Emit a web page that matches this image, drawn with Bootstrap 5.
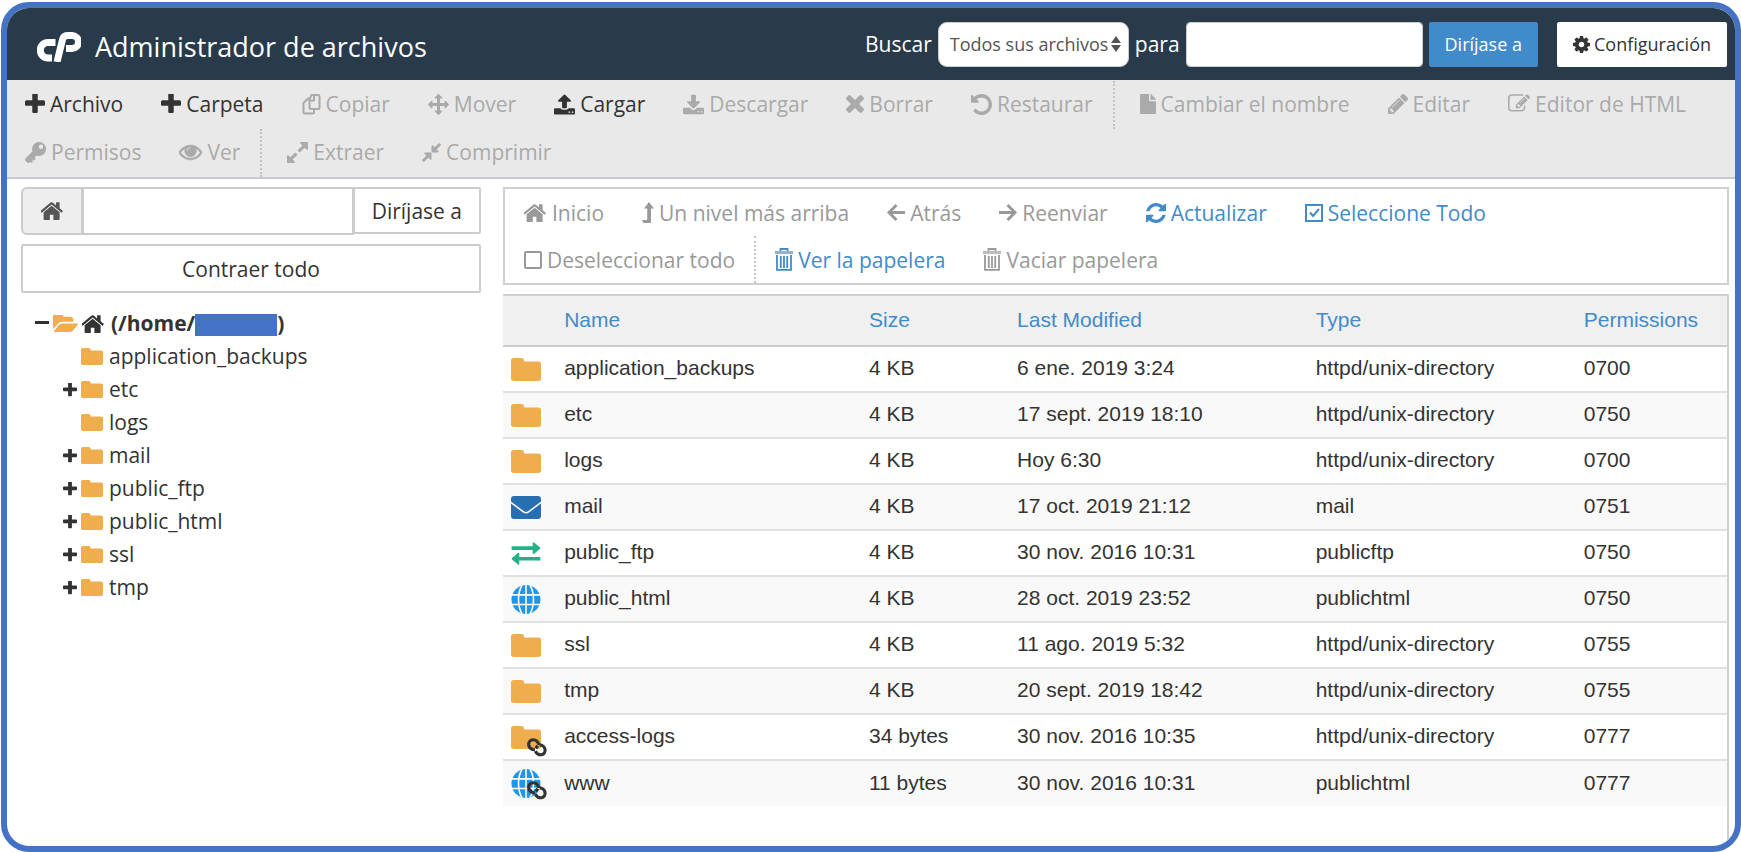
<!DOCTYPE html>
<html lang="es">
<head>
<meta charset="utf-8">
<meta name="viewport" content="width=device-width, initial-scale=1">
<title>Administrador de archivos</title>
<link href="https://cdn.jsdelivr.net/npm/bootstrap@5.3.0/dist/css/bootstrap.min.css" rel="stylesheet">
<style>
  :root { --frame: #4472c4; --navy: #293a4a; --line: #ccc; --ink: #333; --link: #428bca; --folder: #f0ad4e; }
  body { font-family: "Open Sans", sans-serif; font-size: 21px; line-height: 30px; color: var(--ink); background: #fff; padding: 2px 0 0 1px; }
  svg { fill: currentColor; flex: none; display: block; }
  .app-frame { border: 6px solid var(--frame); border-radius: 28px; min-height: calc(100vh - 2px); overflow: hidden; }
  .topbar { background: var(--navy); color: #fff; min-height: 72px; padding: 0 8px 0 30px; }
  .brand { gap: 14px; padding-top: 6px; }
  .brand h1 { font-size: 27px; line-height: 40px; }
  .search-form { gap: 6px; }
  .search-form .form-control, .search-form .form-select, .search-form .btn { height: 45px; font-size: 18px; line-height: 24px; border-color: #ccc; }
  .search-form .form-select { width: 191px; padding: 0 20px 0 11px; color: #555; border-radius: 9px; background-size: 10px 16px; background-position: right 7px center;
    background-image: url("data:image/svg+xml,%3csvg xmlns='http://www.w3.org/2000/svg' viewBox='0 0 10 16'%3e%3cpath fill='%23555' d='M0 7l5-7 5 7zM0 9h10l-5 7z'/%3e%3c/svg%3e"); }
  .search-form .form-control { width: 237px; border-radius: 4px; }
  .search-form .btn { border-radius: 2px; padding: 0 15px; }
  .search-form .btn-go { background: var(--link); color: #fff; border-color: #428bca; }
  .btn-plain { background: #fff; color: var(--ink); border: 2px solid var(--line); }
  .search-form .btn-config { margin-left: 13px; gap: 4px; border-color: #fff; padding: 0 14px; }
  .toolbar { background: #e9e9e9; border-bottom: 2px solid #c7cbd0; padding-top: 1px; }
  .toolbar .btn, .actions .btn { border: 0; border-radius: 0; font-size: 21px; line-height: 30px; gap: 5px; color: var(--ink); display: flex; align-items: center; }
  .toolbar .btn { height: 48px; padding: 0 20px 2px 18px; }
  .actions .btn { height: 47px; padding: 0 19px; }
  .toolbar .btn:disabled { color: #aaa; opacity: 1; }
  .actions .btn { color: var(--link); }
  .actions .btn:disabled { color: #999; opacity: 1; }
  .group-start { border-left: 2px dotted #c4c4c4; }
  .toolbar .group-start { padding-left: 7px; }
  .panes { padding: 8px 6px 0 14px; gap: 22px; flex: 1; }
  .tree-pane { width: 460px; flex: none; }
  .path-bar .input-group-text { width: 62px; background: #eee; border: 2px solid var(--line); border-radius: 6px; color: #555; justify-content: center; }
  .path-bar .form-control { height: 48px; border: 2px solid var(--line); }
  .path-bar .btn { border-radius: 2px; height: 47px; font-size: 21px; line-height: 24px; padding: 0 17px; }
  .btn-collapse { height: 49px; border-radius: 2px; font-size: 21px; line-height: 30px; margin-top: 9px; }
  .tree { margin: 14px 0 0; }
  .tree-row { height: 33px; gap: 4px; padding-left: 14px; }
  .tree-row a { color: inherit; text-decoration: none; line-height: 33px; padding-left: 2px; }
  .tree-branch .tree-row { padding-left: 42px; }
  .tree .toggle { width: 14px; height: 14px; padding: 0; border: 0; background: none; color: var(--ink); }
  .tree svg.dir { color: var(--folder); }
  .redacted { display: inline-block; width: 82px; height: 22px; background: var(--frame); vertical-align: middle; }
  .actions { border: 2px solid #d0d0d0; }
  .list-box { margin-top: 9px; border-right: 2px solid #d0d0d0; border-top: 2px solid #d0d0d0; flex: 1; }
  .files { font-family: "Liberation Sans", sans-serif; font-size: 21px; line-height: 24px; table-layout: fixed; width: 100%; margin: 0; color: var(--ink); }
  .files th { background: #f0f0f0; font-weight: 400; height: 50px; padding: 0 0 2px; border-bottom: 2px solid var(--line); }
  .files th a { color: var(--link); text-decoration: none; }
  .files td { height: 46px; padding: 0 0 2px; border-bottom: 2px solid #e0e0e0; }
  .files tr:nth-child(even) td { background: #f9f9f9; }
  .files tr:last-child td { border-bottom: 0; }
  .files td:first-child { padding: 0 0 0 8px; }
  .col-icon { width: 5%; } .col-name { width: 24.9%; } .col-size { width: 12.1%; } .col-date { width: 24.4%; } .col-type { width: 21.9%; }
  .file-icon { position: relative; width: 30px; }
  .file-icon .chain { position: absolute; left: 15px; top: 10px; color: var(--ink); }
  .ic-folder { color: var(--folder); } .ic-mail { color: #286fb1; } .ic-ftp { color: #26b08a; } .ic-web { color: #2196e8; }
</style>
</head>
<body>
<svg class="d-none" aria-hidden="true">
  <symbol id="plus" viewBox="192 192 1408 1408"><path d="M1600 736v192q0 40-28 68t-68 28h-416v416q0 40-28 68t-68 28h-192q-40 0-68-28t-28-68v-416h-416q-40 0-68-28t-28-68v-192q0-40 28-68t68-28h416v-416q0-40 28-68t68-28h192q40 0 68 28t28 68v416h416q40 0 68 28t28 68z"/></symbol>
  <symbol id="home" viewBox="75 240 1642 1296"><path d="M1408 992v480q0 26-19 45t-45 19h-384v-384h-256v384h-384q-26 0-45-19t-19-45v-480q0-1 .5-3t.5-3l575-474 575 474q1 2 1 6zm223-69l-62 74q-8 9-21 11h-3q-13 0-21-7l-692-577-692 577q-12 8-24 7-13-2-21-11l-62-74q-8-10-7-23.5t11-21.5l719-599q32-26 76-26t76 26l244 204v-195q0-14 9-23t23-9h192q14 0 23 9t9 23v408l219 182q10 8 11 21.5t-7 23.5z"/></symbol>
  <symbol id="folder" viewBox="64 128 1664 1408" preserveAspectRatio="none"><path d="M1728 608v784q0 60-42 102t-102 42h-1376q-60 0-102-42t-42-102v-1120q0-60 42-102t102-42h440q60 0 102 42t42 102v64h792q60 0 102 42t42 102z"/></symbol>
  <symbol id="folder-open" viewBox="0 256 1880 1280"><path d="M1879 952q0 31-31 66l-336 396q-43 51-120.500 86.500t-143.500 35.500h-1088q-34 0-60.500-13t-26.500-43q0-31 31-66l336-396q43-51 120.500-86.500t143.500-35.500h1088q34 0 60.500 13t26.500 43zm-343-344v160h-832q-94 0-197 47.500t-164 119.500l-337 396-5 6q0-4-.5-12.500t-.5-12.500v-960q0-92 66-158t158-66h320q92 0 158 66t66 158v32h544q92 0 158 66t66 158z"/></symbol>
  <symbol id="cog" viewBox="128 128 1536 1536"><path d="M1152 896q0-106-75-181t-181-75-181 75-75 181 75 181 181 75 181-75 75-181zm512-109v222q0 12-8 23t-20 13l-185 28q-19 54-39 91 35 50 107 138 10 12 10 25t-9 23q-27 37-99 108t-94 71q-12 0-26-9l-138-108q-44 23-91 38-16 136-29 186-7 28-36 28h-222q-14 0-24.500-8.500t-11.500-21.500l-28-184q-49-16-90-37l-141 107q-10 9-25 9-14 0-25-11-126-114-165-168-7-10-7-23 0-12 8-23 15-21 51-66.500t54-70.500q-27-50-41-99l-183-27q-13-2-21-12.500t-8-23.500v-222q0-12 8-23t19-13l186-28q14-46 39-92-40-57-107-138-10-12-10-24 0-10 9-23 26-36 98.500-107.500t94.500-71.500q13 0 26 10l138 107q44-23 91-38 16-136 29-186 7-28 36-28h222q14 0 24.500 8.500t11.500 21.500l28 184q49 16 90 37l142-107q9-9 24-9 13 0 25 10 129 119 165 170 7 8 7 22 0 12-8 23-15 21-51 66.500t-54 70.500q26 50 41 98l183 28q13 2 21 12.500t8 23.500z"/></symbol>
  <symbol id="copy" viewBox="0 0 19 21"><path d="M9.500 1H16q1.500 0 1.500 1.500v11q0 1.500-1.500 1.500H9q-1.500 0-1.500-1.500V5.500q0-1.500 1-2.500zM7.500 6.500H12V1M7.500 4.500H6L1.500 9v9q0 1.500 1.500 1.500h7.500q1.500 0 1.500-1.500v-3" fill="none" stroke="currentColor" stroke-width="2" stroke-linejoin="round"/></symbol>
  <symbol id="move" viewBox="0 0 1792 1792"><path d="M1792 896q0 26-19 45l-256 256q-19 19-45 19t-45-19-19-45v-128h-384v384h128q26 0 45 19t19 45-19 45l-256 256q-19 19-45 19t-45-19l-256-256q-19-19-19-45t19-45 45-19h128v-384h-384v128q0 26-19 45t-45 19-45-19l-256-256q-19-19-19-45t19-45l256-256q19-19 45-19t45 19 19 45v128h384v-384h-128q-26 0-45-19t-19-45 19-45l256-256q19-19 45-19t45 19l256 256q19 19 19 45t-19 45-45 19h-128v384h384v-128q0-26 19-45t45-19 45 19l256 256q19 19 19 45z"/></symbol>
  <symbol id="upload" viewBox="64 64 1664 1600"><path d="M1344 1472q0-26-19-45t-45-19-45 19-19 45 19 45 45 19 45-19 19-45zm256 0q0-26-19-45t-45-19-45 19-19 45 19 45 45 19 45-19 19-45zm128-224v320q0 40-28 68t-68 28h-1472q-40 0-68-28t-28-68v-320q0-40 28-68t68-28h427q21 56 70.500 92t110.500 36h256q61 0 110.500-36t70.500-92h427q40 0 68 28t28 68zm-325-648q-17 40-59 40h-256v448q0 26-19 45t-45 19h-256q-26 0-45-19t-19-45v-448h-256q-42 0-59-40-17-39 14-69l448-448q18-19 45-19t45 19l448 448q31 30 14 69z"/></symbol>
  <symbol id="download" viewBox="64 0 1664 1536"><path d="M1344 1344q0-26-19-45t-45-19-45 19-19 45 19 45 45 19 45-19 19-45zm256 0q0-26-19-45t-45-19-45 19-19 45 19 45 45 19 45-19 19-45zm128-224v320q0 40-28 68t-68 28h-1472q-40 0-68-28t-28-68v-320q0-40 28-68t68-28h465l135 136q58 56 136 56t136-56l136-136h464q40 0 68 28t28 68zm-325-569q17 41-14 70l-448 448q-18 19-45 19t-45-19l-448-448q-31-29-14-70 17-39 59-39h256v-448q0-26 19-45t45-19h256q26 0 45 19t19 45v448h256q42 0 59 39z"/></symbol>
  <symbol id="times" viewBox="302 302 1188 1188"><path d="M1490 1322q0 40-28 68l-136 136q-28 28-68 28t-68-28l-294-294-294 294q-28 28-68 28t-68-28l-136-136q-28-28-28-68t28-68l294-294-294-294q-28-28-28-68t28-68l136-136q28-28 68-28t68 28l294 294 294-294q28-28 68-28t68 28l136 136q28 28 28 68t-28 68l-294 294 294 294q28 28 28 68z" transform="translate(0 -64)"/></symbol>
  <symbol id="undo" viewBox="128 128 1536 1536"><path d="M1664 896q0 156-61 298t-164 245-245 164-298 61q-172 0-327-72.500t-264-204.500q-7-10-6.500-22.500t8.500-20.500l137-138q10-9 25-9 16 2 23 12 73 95 179 147t225 52q104 0 198.500-40.500t163.500-109.500 109.500-163.500 40.500-198.500-40.500-198.500-109.500-163.500-163.500-109.500-198.500-40.500q-98 0-188 35.500t-160 101.500l137 138q31 30 14 69-17 40-59 40h-448q-26 0-45-19t-19-45v-448q0-42 40-59 39-17 69 14l130 129q107-101 244.500-156.500t284.500-55.500q156 0 298 61t245 164 164 245 61 298z"/></symbol>
  <symbol id="file" viewBox="0 0 16 20"><path d="M1 0h8v6.500q0 .8.800.8H16V19q0 1-1 1H1q-1 0-1-1V1q0-1 1-1zM10.500 0q.7.200 1.200.7l3.500 3.600q.6.600.700 1.500h-5.400z"/></symbol>
  <symbol id="pencil" viewBox="128 149 1515 1515"><path d="M491 1536l91-91-235-235-91 91v107h128v128h107zm523-928q0-22-22-22-10 0-17 7l-542 542q-7 7-7 17 0 22 22 22 10 0 17-7l542-542q7-7 7-17zm-54-192l416 416-832 832h-416v-416zm683 96q0 53-37 90l-166 166-416-416 166-165q36-38 90-38 53 0 91 38l235 234q37 39 37 91z"/></symbol>
  <symbol id="edit" viewBox="0 184 1792 1480"><path d="M888 1184l116-116-152-152-116 116v56h96v96h56zm440-720q-16-16-33 1l-350 350q-17 17-1 33t33-1l350-350q17-17 1-33zm80 594v190q0 119-84.500 203.500t-203.500 84.500h-832q-119 0-203.500-84.500t-84.500-203.500v-832q0-119 84.500-203.500t203.500-84.500h832q63 0 117 25 15 7 18 23 3 17-9 29l-49 49q-14 14-32 8-23-6-45-6h-832q-66 0-113 47t-47 113v832q0 66 47 113t113 47h832q66 0 113-47t47-113v-126q0-13 9-22l64-64q15-15 35-7t20 29zm-96-738l288 288-672 672h-288v-288zm444 132l-92 92-288-288 92-92q28-28 68-28t68 28l152 152q28 28 28 68t-28 68z"/></symbol>
  <symbol id="key" viewBox="0 0 21 21"><path fill-rule="evenodd" d="M14 0a7 7 0 1 1-2.300 13.600L9.500 15.800l1.300 1.300-1.600 1.600-1.300-1.300-.9.900 1.200 1.200L6.800 21l-1.500-1.200-.9.900q-1.200.6-2.500-.4L.5 19q-.9-1.200 0-2.400L7.500 9.300A7 7 0 0 1 14 0zm2 2.600a2.200 2.200 0 1 0 0 4.400 2.200 2.200 0 0 0 0-4.400z"/></symbol>
  <symbol id="eye" viewBox="0 384 1792 1152"><path d="M1664 960q-152-236-381-353 61 104 61 225 0 185-131.500 316.500t-316.500 131.500-316.500-131.500-131.500-316.500q0-121 61-225-229 117-381 353 133 205 333.500 326.500t434.500 121.500 434.500-121.500 333.500-326.500zm-720-384q0-20-14-34t-34-14q-125 0-214.500 89.500t-89.500 214.500q0 20 14 34t34 14 34-14 14-34q0-86 61-147t147-61q20 0 34-14t14-34zm848 384q0 34-20 69-140 230-376.500 368.500t-499.500 138.500-499.500-139-376.500-368q-20-35-20-69t20-69q140-229 376.500-368t499.500-139 499.500 139 376.500 368q20 35 20 69z" stroke="currentColor" stroke-width="60"/></symbol>
  <symbol id="expand" viewBox="128 128 1536 1536"><path d="M883 1056q0 13-10 23l-332 332 144 144q19 19 19 45t-19 45-45 19h-448q-26 0-45-19t-19-45v-448q0-26 19-45t45-19 45 19l144 144 332-332q10-10 23-10t23 10l114 114q10 10 10 23zm781-864v448q0 26-19 45t-45 19-45-19l-144-144-332 332q-10 10-23 10t-23-10l-114-114q-10-10-10-23t10-23l332-332-144-144q-19-19-19-45t19-45 45-19h448q26 0 45 19t19 45z"/></symbol>
  <symbol id="compress" viewBox="141 141 1510 1510"><path d="M896 960v448q0 26-19 45t-45 19-45-19l-144-144-332 332q-10 10-23 10t-23-10l-114-114q-10-10-10-23t10-23l332-332-144-144q-19-19-19-45t19-45 45-19h448q26 0 45 19t19 45zm755-672q0 13-10 23l-332 332 144 144q19 19 19 45t-19 45-45 19h-448q-26 0-45-19t-19-45v-448q0-26 19-45t45-19 45 19l144 144 332-332q10-10 23-10t23 10l114 114q10 10 10 23z"/></symbol>
  <symbol id="refresh" viewBox="128 128 1536 1536"><path d="M1639 1056q0 5-1 7-64 268-268 434.500t-478 166.500q-146 0-282.500-55t-243.500-157l-129 129q-19 19-45 19t-45-19-19-45v-448q0-26 19-45t45-19h448q26 0 45 19t19 45-19 45l-137 137q71 66 161 102t187 36q134 0 250-65t186-179q11-17 53-117 8-23 30-23h192q13 0 22.500 9.500t9.500 22.500zm25-800v448q0 26-19 45t-45 19h-448q-26 0-45-19t-19-45 19-45l138-138q-148-137-349-137-134 0-250 65t-186 179q-11 17-53 117-8 23-30 23h-199q-13 0-22.500-9.500t-9.500-22.500v-7q65-268 270-434.500t480-166.500q146 0 284 55.500t245 156.500l130-129q19-19 45-19t45 19 19 45z"/></symbol>
  <symbol id="level-up" viewBox="0 0 12 21"><path d="M7 0l5 6.500H9V20q0 1-1 1H1.500L0 18h5.200V6.500H2z"/></symbol>
  <symbol id="arrow-left" viewBox="0 0 18 19"><path d="M9.500 2L2 9.500 9.500 17M2.500 9.500H18" fill="none" stroke="currentColor" stroke-width="3"/></symbol>
  <symbol id="arrow-right" viewBox="0 0 18 19"><path d="M8.500 2L16 9.500 8.500 17M15.500 9.500H0" fill="none" stroke="currentColor" stroke-width="3"/></symbol>
  <symbol id="check" viewBox="0 0 18 18"><path d="M1 1h16v16H1zM5 8.500l3 3.500 6-7" fill="none" stroke="currentColor" stroke-width="2"/></symbol>
  <symbol id="square" viewBox="0 0 18 18"><rect x="1" y="1" width="16" height="16" rx="1" fill="none" stroke="currentColor" stroke-width="2"/></symbol>
  <symbol id="trash" viewBox="0 0 18 23"><path d="M0 3h18v3H0z" opacity=".65"/><path d="M5.500 3V1h7v2M2 7v14.800h14V7M5.800 8v12M9 8v12M12.200 8v12" fill="none" stroke="currentColor" stroke-width="1.800"/></symbol>
  <symbol id="envelope" viewBox="0 0 30 23"><path d="M3 0h24q3 0 3 3v2.500L17 15.300q-2 1.400-4 0L0 5.500V3q0-3 3-3zM0 7.500l12 9q3 2.200 6 0l12-9V20q0 3-3 3H3q-3 0-3-3z"/></symbol>
  <symbol id="exchange" viewBox="0 0 30 24"><path d="M0 4.500h22V1.200q0-1.500 1.300-.8l6.100 5q1.100 1 0 2l-6.100 5q-1.300.7-1.300-.8V8.300H0zM30 15.600H8v-3.300q0-1.500-1.300-.8L.6 16.500q-1.100 1 0 2l6.100 5q1.300.7 1.300-.8v-3.300h22z"/></symbol>
  <symbol id="globe" viewBox="0 0 30 30"><circle cx="15" cy="15" r="15"/><path d="M0 10.200h30M0 20.200h30M15 0v30M11 0C6 8 6 22 11 30M19 0C24 8 24 22 19 30" fill="none" stroke="#fff" stroke-width="1.600"/></symbol>
  <symbol id="link" viewBox="0 0 21 21"><g fill="none" stroke="currentColor" stroke-width="3"><path d="M8.500 13A5 4.500 40 1 1 11.500 6.500q.8 1 .8 2.200M9 9.500l2.500 2"/><path d="M13 8.500a5 4.500 40 1 1-4 6"/></g></symbol>
</svg>

<div class="app-frame d-flex flex-column">
  <header class="topbar d-flex align-items-center justify-content-between">
    <div class="brand d-flex align-items-center">
      <svg width="44" height="30" viewBox="0 0 44 30" role="img" aria-label="cPanel"><g fill="none" stroke="#fff" stroke-width="7"><path d="M18.500 10.500H11a7.500 7.500 0 0 0 0 15.500H15"/><path d="M20 30L25.700 7Q26.800 3.500 31 3.500H35a6.500 6.500 0 0 1 0 13H29"/></g></svg>
      <h1 class="m-0 fw-normal">Administrador de archivos</h1>
    </div>
    <form class="search-form d-flex align-items-center">
      <label for="scope">Buscar</label>
      <select id="scope" class="form-select"><option>Todos sus archivos</option></select>
      <label for="query">para</label>
      <input id="query" type="text" class="form-control">
      <button type="button" class="btn btn-go">Diríjase a</button>
      <button type="button" class="btn btn-plain btn-config d-flex align-items-center"><svg width="17" height="17"><use href="#cog"/></svg>Configuración</button>
    </form>
  </header>

  <nav class="toolbar d-flex flex-wrap" aria-label="Herramientas">
    <button class="btn"><svg width="20" height="20"><use href="#plus"/></svg>Archivo</button>
    <button class="btn"><svg width="20" height="20"><use href="#plus"/></svg>Carpeta</button>
    <button class="btn" disabled><svg width="19" height="21"><use href="#copy"/></svg>Copiar</button>
    <button class="btn" disabled><svg width="21" height="21"><use href="#move"/></svg>Mover</button>
    <button class="btn"><svg width="21" height="21"><use href="#upload"/></svg>Cargar</button>
    <button class="btn" disabled><svg width="21" height="21"><use href="#download"/></svg>Descargar</button>
    <button class="btn" disabled><svg width="18" height="18"><use href="#times"/></svg>Borrar</button>
    <button class="btn" disabled><svg width="21" height="21"><use href="#undo"/></svg>Restaurar</button>
    <div class="group-start"><button class="btn" disabled><svg width="16" height="20"><use href="#file"/></svg>Cambiar el nombre</button></div>
    <button class="btn" disabled><svg width="20" height="20"><use href="#pencil"/></svg>Editar</button>
    <button class="btn" disabled><svg width="22" height="20"><use href="#edit"/></svg>Editor de HTML</button>
    <button class="btn" disabled><svg width="21" height="21"><use href="#key"/></svg>Permisos</button>
    <button class="btn" disabled><svg width="23" height="17"><use href="#eye"/></svg>Ver</button>
    <div class="group-start"><button class="btn" disabled><svg width="21" height="21"><use href="#expand"/></svg>Extraer</button></div>
    <button class="btn" disabled><svg width="19" height="19"><use href="#compress"/></svg>Comprimir</button>
  </nav>

  <div class="panes d-flex">
    <aside class="tree-pane">
      <div class="path-bar input-group align-items-start">
        <label class="input-group-text align-self-stretch" for="path" aria-label="Ruta"><svg width="23" height="18"><use href="#home"/></svg></label>
        <input id="path" type="text" class="form-control">
        <button type="button" class="btn btn-plain">Diríjase a</button>
      </div>
      <button type="button" class="btn btn-plain btn-collapse w-100">Contraer todo</button>
      <ul class="tree list-unstyled">
        <li>
          <div class="tree-row d-flex align-items-center"><button class="toggle" aria-label="Contraer"><svg width="14" height="14" viewBox="0 0 14 14"><path d="M0 4h14v3H0z"/></svg></button><svg class="dir" width="25" height="17"><use href="#folder-open"/></svg><svg width="23" height="18"><use href="#home"/></svg><a href="#" class="fw-bold">(/home/<span class="redacted"></span>)</a></div>
          <ul class="tree-branch list-unstyled" id="tree"></ul>
        </li>
      </ul>
    </aside>

    <main class="d-flex flex-column flex-fill">
      <div class="actions d-flex flex-wrap">
        <button class="btn" disabled><svg width="23" height="18"><use href="#home"/></svg>Inicio</button>
        <button class="btn" disabled><svg width="12" height="21"><use href="#level-up"/></svg>Un nivel más arriba</button>
        <button class="btn" disabled><svg width="18" height="19"><use href="#arrow-left"/></svg>Atrás</button>
        <button class="btn" disabled><svg width="18" height="19"><use href="#arrow-right"/></svg>Reenviar</button>
        <button class="btn"><svg width="20" height="20"><use href="#refresh"/></svg>Actualizar</button>
        <button class="btn"><svg width="18" height="18"><use href="#check"/></svg>Seleccione Todo</button>
        <button class="btn" disabled><svg width="18" height="18"><use href="#square"/></svg>Deseleccionar todo</button>
        <div class="group-start"><button class="btn"><svg width="18" height="23"><use href="#trash"/></svg>Ver la papelera</button></div>
        <button class="btn" disabled><svg width="18" height="23"><use href="#trash"/></svg>Vaciar papelera</button>
      </div>
      <div class="list-box">
        <table class="files">
          <colgroup><col class="col-icon"><col class="col-name"><col class="col-size"><col class="col-date"><col class="col-type"><col></colgroup>
          <thead><tr><th></th><th><a href="#">Name</a></th><th><a href="#">Size</a></th><th><a href="#">Last Modified</a></th><th><a href="#">Type</a></th><th><a href="#">Permissions</a></th></tr></thead>
          <tbody id="files"></tbody>
        </table>
      </div>
    </main>
  </div>
</div>

<script src="https://cdn.jsdelivr.net/npm/bootstrap@5.3.0/dist/js/bootstrap.bundle.min.js"></script>
<script>
  const icons = {
    folder: '<svg class="ic-folder" width="30" height="23"><use href="#folder"/></svg>',
    mail: '<svg class="ic-mail" width="30" height="23"><use href="#envelope"/></svg>',
    ftp: '<svg class="ic-ftp" width="30" height="23"><use href="#exchange"/></svg>',
    web: '<svg class="ic-web" width="30" height="29"><use href="#globe"/></svg>'
  };
  const dirType = 'httpd/unix-directory';
  const files = [
    ['folder', 'application_backups', '4 KB', '6 ene. 2019 3:24', dirType, '0700'],
    ['folder', 'etc', '4 KB', '17 sept. 2019 18:10', dirType, '0750'],
    ['folder', 'logs', '4 KB', 'Hoy 6:30', dirType, '0700'],
    ['mail', 'mail', '4 KB', '17 oct. 2019 21:12', 'mail', '0751'],
    ['ftp', 'public_ftp', '4 KB', '30 nov. 2016 10:31', 'publicftp', '0750'],
    ['web', 'public_html', '4 KB', '28 oct. 2019 23:52', 'publichtml', '0750'],
    ['folder', 'ssl', '4 KB', '11 ago. 2019 5:32', dirType, '0755'],
    ['folder', 'tmp', '4 KB', '20 sept. 2019 18:42', dirType, '0755'],
    ['folder', 'access-logs', '34 bytes', '30 nov. 2016 10:35', dirType, '0777', true],
    ['web', 'www', '11 bytes', '30 nov. 2016 10:31', 'publichtml', '0777', true]
  ];
  const chain = '<svg class="chain" width="22" height="22"><use href="#link"/></svg>';
  document.getElementById('files').innerHTML = files.map(([icon, name, size, date, type, perm, linked]) =>
    `<tr><td><div class="file-icon">${icons[icon]}${linked ? chain : ''}</div></td><td>${name}</td><td>${size}</td><td>${date}</td><td>${type}</td><td>${perm}</td></tr>`).join('');

  const plus = '<svg width="14" height="14"><use href="#plus"/></svg>';
  const tree = [['application_backups', 0], ['etc', 1], ['logs', 0], ['mail', 1], ['public_ftp', 1], ['public_html', 1], ['ssl', 1], ['tmp', 1]];
  document.getElementById('tree').innerHTML = tree.map(([name, open]) =>
    `<li><div class="tree-row d-flex align-items-center">${open ? `<button class="toggle" aria-label="Expandir ${name}">${plus}</button>` : '<span class="toggle"></span>'}<svg class="dir" width="22" height="17"><use href="#folder"/></svg><a href="#">${name}</a></div></li>`).join('');
</script>
</body>
</html>
